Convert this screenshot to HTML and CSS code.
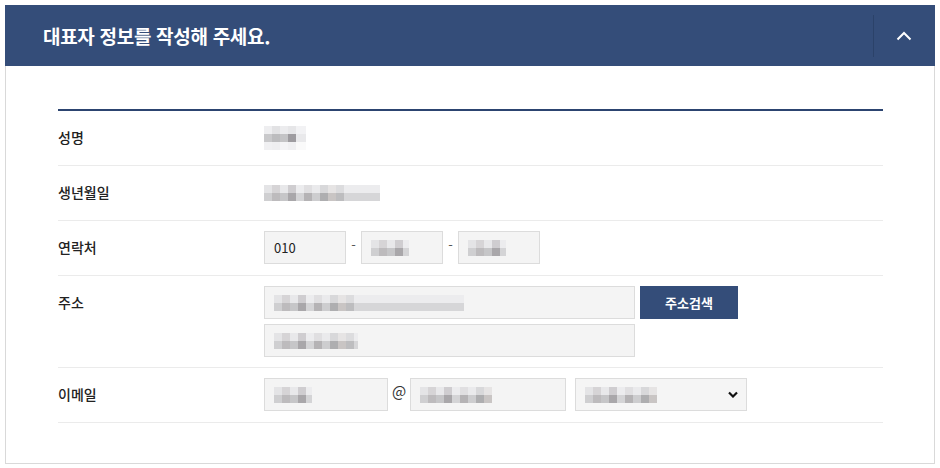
FILE: index.html
```html
<!DOCTYPE html>
<html lang="ko">
<head>
    <meta charset="UTF-8">
    <meta name="viewport" content="width=device-width, initial-scale=1.0">
    <title>대표자 정보</title>
    <link rel="stylesheet" href="styles.css">
</head>
<body>
    <div class="panel">
        <div class="panel-head">
            <h2>대표자 정보를 작성해 주세요.</h2>
            <button class="toggle" type="button" aria-label="접기">
                <svg width="16" height="10" viewBox="0 0 16 10"><polyline points="1.5,8.5 8,2 14.5,8.5" fill="none" stroke="#fff" stroke-width="2"/></svg>
            </button>
        </div>
        <div class="panel-body">
            <div class="form-table">
                <div class="row">
                    <div class="label">성명</div>
                    <div class="value"><span class="mosaic m-name"></span></div>
                </div>
                <div class="row">
                    <div class="label">생년월일</div>
                    <div class="value"><span class="mosaic m-birth"></span></div>
                </div>
                <div class="row">
                    <div class="label">연락처</div>
                    <div class="value">
                        <div class="field w-tel"><span class="txt">010</span></div>
                        <span class="dash">-</span>
                        <div class="field w-tel"><span class="mosaic m-short"></span></div>
                        <span class="dash">-</span>
                        <div class="field w-tel"><span class="mosaic m-short"></span></div>
                    </div>
                </div>
                <div class="row">
                    <div class="label">주소</div>
                    <div class="value col">
                        <div class="line">
                            <div class="field w-addr"><span class="mosaic m-addr"></span></div>
                            <button class="btn" type="button">주소검색</button>
                        </div>
                        <div class="field w-addr"><span class="mosaic m-addr2"></span></div>
                    </div>
                </div>
                <div class="row">
                    <div class="label">이메일</div>
                    <div class="value">
                        <div class="field w-id"><span class="mosaic m-short"></span></div>
                        <span class="at">@</span>
                        <div class="field w-domain"><span class="mosaic m-domain"></span></div>
                        <div class="field select w-select">
                            <span class="mosaic m-domain"></span>
                            <svg width="10" height="7" viewBox="0 0 10 7"><polyline points="1,1.5 5,5.5 9,1.5" fill="none" stroke="#111" stroke-width="2.2"/></svg>
                        </div>
                    </div>
                </div>
            </div>
        </div>
    </div>
</body>
</html>
```

FILE: styles.css
```css
body {
    margin: 0;
    padding: 5px;
    font-family: "Noto Sans CJK KR", "Noto Sans", sans-serif;
    color: #333;
    background: #fff;
}

.panel {
    width: 930px;
    box-sizing: border-box;
}

.panel-head {
    display: flex;
    align-items: center;
    height: 61px;
    background: #344d79;
    color: #fff;
}

.panel-head h2 {
    flex: 1;
    margin: 0;
    padding-left: 38px;
    font-size: 19px;
    font-weight: bold;
    letter-spacing: -0.3px;
}

.toggle {
    width: 61px;
    height: 42px;
    border: none;
    border-left: 1px solid #2b4269;
    background: transparent;
    display: flex;
    align-items: center;
    justify-content: center;
    padding: 0;
    margin-right: 1px;
}

.panel-body {
    border: 1px solid #d9d9d9;
    border-top: none;
    padding: 43px 51px 40px 52px;
}

.form-table {
    border-top: 2px solid #2c4470;
}

.row {
    display: flex;
    align-items: flex-start;
    min-height: 55px;
    box-sizing: border-box;
    padding: 10px 0;
    border-bottom: 1px solid #ebebeb;
}

.label {
    width: 206px;
    line-height: 33px;
    font-size: 14px;
    font-weight: 500;
    color: #222;
}

.value {
    display: flex;
    align-items: center;
    min-height: 33px;
}

.value.col {
    flex-direction: column;
    align-items: flex-start;
    gap: 5px;
}

.line {
    display: flex;
    gap: 5px;
}

.field {
    height: 33px;
    box-sizing: border-box;
    background: #f4f4f4;
    border: 1px solid #dcdcdc;
    display: flex;
    align-items: center;
    padding: 0 9px;
    font-size: 13px;
    color: #222;
}

.w-tel { width: 82px; }
.w-addr { width: 371px; }
.w-id { width: 124px; }
.w-domain { width: 156px; }
.w-select {
    width: 172px;
    margin-left: 9px;
    background: #f5f5f5;
    justify-content: space-between;
    padding-right: 8px;
}

.dash {
    width: 15px;
    text-align: center;
    color: #555;
    font-size: 13px;
    padding-bottom: 6px;
}

.at {
    width: 22px;
    text-align: center;
    font-size: 15px;
    color: #333;
    padding-bottom: 8px;
}

.btn {
    width: 98px;
    height: 33px;
    border: none;
    background: #344d79;
    color: #fff;
    font-family: inherit;
    font-size: 13px;
    font-weight: bold;
}

.mosaic {
    display: inline-block;
    height: 16px;
    background:
        linear-gradient(to right, #e4e4e6 0 8px, #d6d4d6 8px 16px, #e8e8ea 16px 24px, #cfcdd0 24px 32px, #ececee 32px 40px, #e0dfe1 40px 48px, #eaeaec 48px 56px, #d8d8da 56px 64px, #e6e4e4 64px 72px, #dcdcde 72px 80px, #ececee 80px) top / 100% 8px no-repeat,
        linear-gradient(to right, #cfcfd1 0 8px, #bdbbbd 8px 16px, #c6c6c8 16px 24px, #a9a7aa 24px 32px, #d4d4d6 32px 40px, #b5b3b5 40px 48px, #cdcdcf 48px 56px, #aeaeb0 56px 64px, #c9c5c4 64px 72px, #bdbdbf 72px 80px, #d6d6d8 80px) bottom / 100% 8px no-repeat;
}

.m-name {
    width: 42px;
    height: 24px;
    background:
        linear-gradient(to right, #eeeef0 0 8px, #e2e2e4 8px 16px, #ececee 16px 24px, #e6e6e8 24px 32px, #f2f2f4 32px) top / 100% 8px no-repeat,
        linear-gradient(to right, #c9c9cb 0 8px, #bcbcbe 8px 16px, #c4c4c6 16px 24px, #9e9ca0 24px 32px, #e9e9eb 32px) center / 100% 8px no-repeat,
        linear-gradient(to right, #f0f0f2 0 8px, #eeeef0 8px 16px, #f4f4f6 16px 24px, #f0f0f2 24px 32px, #fafafa 32px) bottom / 100% 8px no-repeat;
}

.m-birth { width: 116px; }
.m-short { width: 38px; }
.m-addr { width: 190px; }
.m-addr2 { width: 84px; }
.m-domain { width: 72px; }

.txt {
    font-size: 13px;
}
```
